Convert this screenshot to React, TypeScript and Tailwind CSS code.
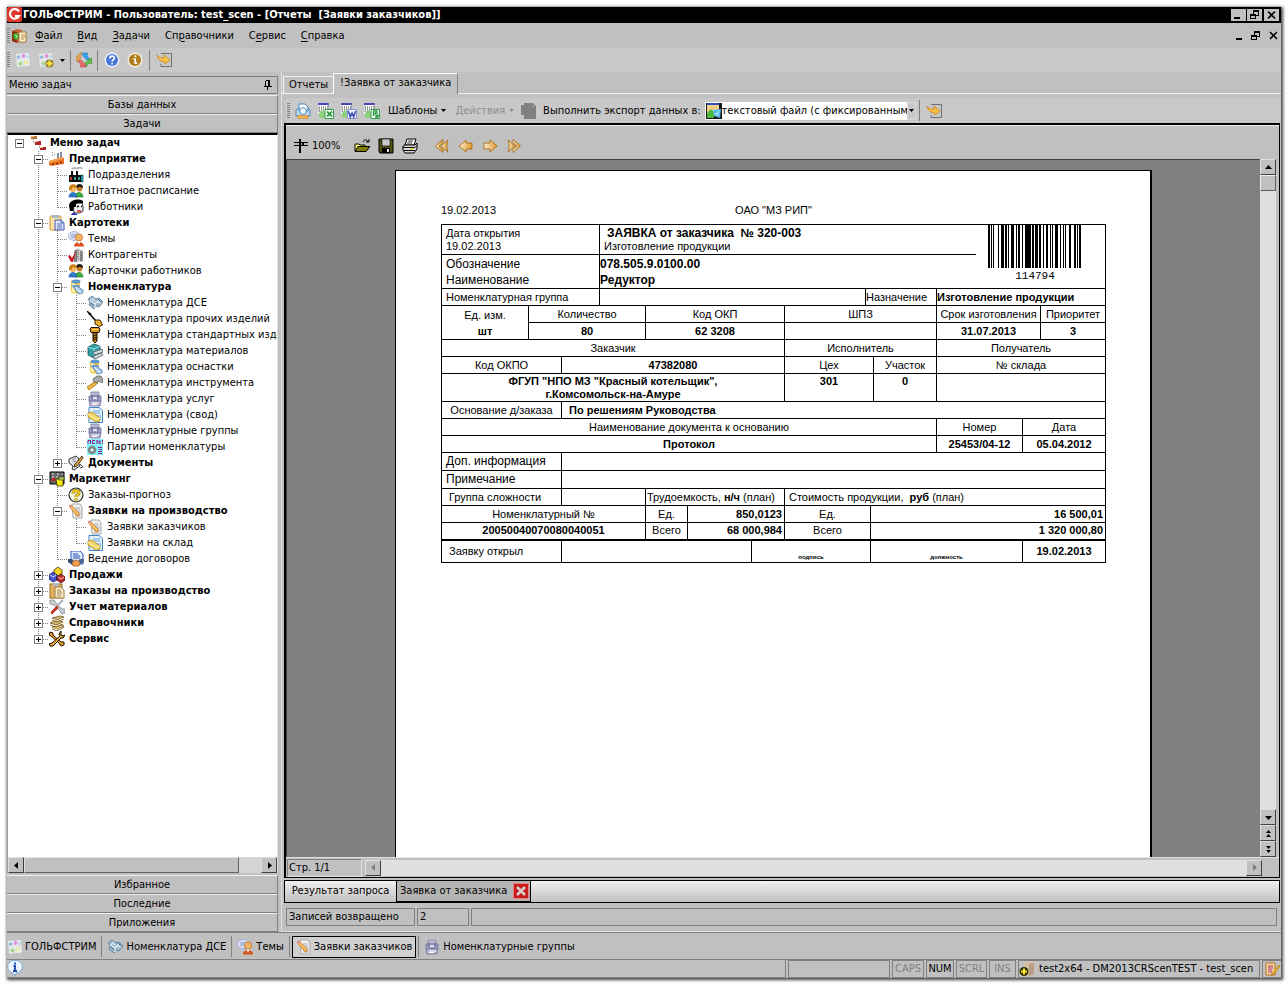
import { useState, type ReactNode } from "react";

/* ---------- icons ---------- */

function Ic({ children }: { children: ReactNode }) {
  return (
    <svg viewBox="0 0 16 16" className="size-4 shrink-0" aria-hidden>
      {children}
    </svg>
  );
}

const LogoIcon = () => (
  <Ic>
    <rect width="15" height="15" rx="2" fill="#e0362c" />
    <path d="M12 4.600A4.800 4.800 0 1 0 12 9H8" fill="none" stroke="#fff" strokeWidth="2.200" />
  </Ic>
);
const AppIcon = () => (
  <Ic>
    <path d="M1 3l5-2 5 1v11l-5 2-5-2z" fill="#c8643c" />
    <path d="M1 3l5 1v11l-5-2z" fill="#8c3014" />
    <path d="M2 6l4-1 2 3-2 4-3-1z" fill="#2fae2f" />
    <path d="M4 7l2 1-1 2" fill="none" stroke="#dfffb0" />
    <path d="M8 4h7v10H8z" fill="#fff4cc" stroke="#a07838" />
    <path d="M10 7h4M10 9h4M10 11h3" stroke="#b08848" />
  </Ic>
);
const Dots = () => (
  <>
    <path d="M1 2l13-1 1 12-13 2z" fill="#e4e8ea" />
    <path d="M2 3h3M10 13h4" stroke="#fff" />
    <circle cx="3.500" cy="5" r="1.800" fill="#8fb8dc" />
    <circle cx="8.500" cy="4" r="1.900" fill="#e48fe0" />
    <circle cx="12.500" cy="4.500" r="1.500" fill="#b8d8f0" />
    <circle cx="5.500" cy="11.500" r="1.900" fill="#a6d68a" />
    <circle cx="11" cy="10.500" r="2.100" fill="#e8e88c" />
    <circle cx="11" cy="10.500" r="0.800" fill="#fff" />
  </>
);
const DotsIcon = () => (
  <Ic>
    <Dots />
  </Ic>
);
const DotsAddIcon = () => (
  <Ic>
    <Dots />
    <circle cx="11.500" cy="11.500" r="4" fill="#8a7a30" />
    <path d="M11.500 8.500v6M8.500 11.500h6" stroke="#ffe93c" strokeWidth="2" />
  </Ic>
);
const CycleIcon = () => (
  <Ic>
    <path d="M6 1h6l-1 3 3 3-3 1-4-4z" fill="#38a0e8" stroke="#1878b8" strokeWidth=".5" />
    <path d="M16 6v6l-3-1-3 4-1-4 4-4z" fill="#5fc04a" stroke="#388828" strokeWidth=".5" />
    <path d="M10 15H4l1-3-4-3 4-1 4 4z" fill="#e86a6a" stroke="#b83838" strokeWidth=".5" />
    <path d="M0 9V5l5-5v5L3 9z" fill="#e0a460" stroke="#b07028" strokeWidth=".5" />
  </Ic>
);
const HelpIcon = () => (
  <Ic>
    <circle cx="8" cy="8" r="7.500" fill="#e8eefa" />
    <circle cx="8" cy="8" r="6" fill="#4676d8" />
    <path d="M5.800 6.400c0-3 4.600-3 4.600-.3 0 1.700-2.300 1.600-2.300 3.600M8.100 11v1.600" fill="none" stroke="#fff" strokeWidth="1.600" />
  </Ic>
);
const InfoIcon = () => (
  <Ic>
    <circle cx="8" cy="8" r="7.500" fill="#f2eadc" />
    <circle cx="8" cy="8" r="6" fill="#b07c1c" />
    <path d="M8.400 3.200v1.900M6.400 7h1.800v4.200h2" fill="none" stroke="#fff" strokeWidth="1.700" />
  </Ic>
);
const ExitIcon = () => (
  <Ic>
    <path d="M5 1.500h10.500v13H5V12" fill="none" stroke="#707070" />
    <path d="M1 3c2 3 4 3 7 3V3l6 5-5 4v-2C5 10 2 8 1 3z" fill="#f8c048" stroke="#c88418" strokeWidth=".8" />
  </Ic>
);
const PrintBlueIcon = () => (
  <Ic>
    <path d="M4 1h6l3 3v4H4z" fill="#fff" stroke="#3c88c8" />
    <path d="M1 7l3-2v3h9V5l2 2v6H1z" fill="#b8d8f0" stroke="#3878b0" strokeWidth=".8" />
    <circle cx="8" cy="8" r="3.400" fill="#e8f4fc" stroke="#5c98c8" />
    <path d="M3 12.500h10v3H3z" fill="#f4b450" stroke="#c88420" strokeWidth=".6" />
  </Ic>
);
const gridBase = (
  <>
    <path d="M0 0h11v11H0z" fill="#fff" />
    <path d="M0 0h11v2H0z" fill="#4444b8" />
    <path d="M1 4h9M1 6h9M1 8h6" stroke="#383838" strokeDasharray="1 1" />
    <path d="M0 0v9M10.500 0v6" stroke="#7878a8" strokeWidth=".7" />
    <path d="M1 11c0-3 4-5 6-2v6H3c-2-1-3-2-2-4z" fill="#8fd07c" />
  </>
);
const ExcelIcon = () => (
  <Ic>
    {gridBase}
    <path d="M7 6.500h8.500v9H7z" fill="#fff" stroke="#2f9c48" />
    <path d="M9 8.500l5 5M14 8.500l-5 5" stroke="#2f9c48" strokeWidth="1.800" />
  </Ic>
);
const WordIcon = () => (
  <Ic>
    {gridBase}
    <path d="M6.500 6.500h9v9h-9z" fill="#fff" stroke="#8890d8" />
    <path d="M7.500 8l1.800 6 1.700-4 1.700 4 1.800-6" fill="none" stroke="#3444b8" strokeWidth="1.500" />
  </Ic>
);
const SheetIcon = () => (
  <Ic>
    {gridBase}
    <path d="M7 6.500h8.500v9H7z" fill="#fff" stroke="#2f9c48" />
    <path d="M9 8h4v2h-2v1l3 3M9.500 8v5M14 11v3h-3" fill="none" stroke="#2f9c48" strokeWidth="1.300" />
  </Ic>
);
const StopDocIcon = () => (
  <Ic>
    <path d="M3 0h9l3 3v13H3v-4H0V2h3z" fill="#808080" />
    <path d="M11 1l3 3h-3z" fill="#989898" />
  </Ic>
);
const ExportIcon = () => (
  <Ic>
    <path d="M0 0h16v16H0z" fill="#181818" />
    <path d="M1 1h12v10H1z" fill="#f4d08c" />
    <path d="M1 0h12v2H1z" fill="#2c50c0" />
    <path d="M1 10l4-4 3 3v6H1z" fill="#50b83c" />
    <path d="M7 7l8-1-1 9-6-2z" fill="#58b8e8" />
    <path d="M8 11l6-4-2 6z" fill="#98dcf8" />
  </Ic>
);
const CropIcon = () => (
  <Ic>
    <path d="M1 4.500h14M1 7.500h14" stroke="#000" shapeRendering="crispEdges" />
    <path d="M7 1v14M9.500 4v4" stroke="#000" strokeWidth="2" shapeRendering="crispEdges" />
  </Ic>
);
const OpenIcon = () => (
  <Ic>
    <path d="M1 13V6h4l1 1h5v2" fill="#ffff70" stroke="#000" />
    <path d="M1 13.500l3-5h12l-4 5z" fill="#808000" stroke="#000" />
    <path d="M9 4c1-3 4-3 5 0M12 4h3V1" fill="none" stroke="#000" />
  </Ic>
);
const SaveIcon = () => (
  <Ic>
    <path d="M1 1h14v14H2l-1-1z" fill="#505010" stroke="#000" />
    <path d="M4 1h8v7H4z" fill="#c8c8c8" stroke="#000" strokeWidth=".6" />
    <path d="M4 10h8v5H4z" fill="#000" />
    <path d="M9 11h2v3H9z" fill="#e8e8e8" />
  </Ic>
);
const PrintIcon = () => (
  <Ic>
    <path d="M5 1h9l-2 6H3z" fill="#fff" stroke="#000" />
    <path d="M6 3h5M5 5h5" stroke="#000" strokeWidth=".8" />
    <path d="M3 7h10l2-2v6l-3 4H3l-2-3V8z" fill="#d8d8d8" stroke="#000" />
    <path d="M1 9.500h12l2-2M2 12.500h11" fill="none" stroke="#000" />
    <path d="M8 11h3" stroke="#e8e000" strokeWidth="1.500" />
  </Ic>
);
const OrangeDefs = () => (
  <defs>
    <linearGradient id="amber" x1="0" x2="1">
      <stop offset="0" stopColor="#f8ecd0" />
      <stop offset="1" stopColor="#e09c30" />
    </linearGradient>
  </defs>
);
const FirstIcon = () => (
  <Ic>
    <OrangeDefs />
    <path d="M9 1.500L1.500 8 9 14.500v-3L5 8l4-3.500z" fill="url(#amber)" stroke="#a86c10" strokeWidth=".9" />
    <path d="M14 2L7 8l7 6-1-3V5z" fill="url(#amber)" stroke="#a86c10" strokeWidth=".9" />
  </Ic>
);
const PrevIcon = () => (
  <Ic>
    <path d="M8 2L1 8l7 6v-3h6V5H8z" fill="url(#amber)" stroke="#a86c10" strokeWidth=".9" />
  </Ic>
);
const NextIcon = () => (
  <Ic>
    <path d="M8 2l7 6-7 6v-3H2V5h6z" fill="url(#amber)" stroke="#a86c10" strokeWidth=".9" />
  </Ic>
);
const LastIcon = () => (
  <Ic>
    <path d="M2 2l7 6-7 6 1-3V5z" fill="url(#amber)" stroke="#a86c10" strokeWidth=".9" />
    <path d="M7 1.500L14.500 8 7 14.500v-3L11 8 7 4.500z" fill="url(#amber)" stroke="#a86c10" strokeWidth=".9" />
  </Ic>
);
const PinIcon = () => (
  <svg viewBox="0 0 8 10" className="h-[10px] w-2" aria-hidden>
    <path d="M2 .5h4M1.500 1v5M5.500 1v5M4.500 1v5M0 6.500h8M3.500 7v3" stroke="#000" shapeRendering="crispEdges" />
  </svg>
);

/* tree icons */
const MenuTreeIcon = () => (
  <Ic>
    <path d="M3.500 4v4h3M9.500 9v4h3" fill="none" stroke="#888" strokeDasharray="1 1" />
    <path d="M1 1h6v3H1z" fill="#b87838" />
    <path d="M5 6h6v4H5z" fill="#b02828" />
    <path d="M10 12h6v3h-6z" fill="#a82424" />
    <path d="M1 1h3v1H1zM5 6h3v1H5zM10 12h3v1h-3z" fill="#f8c890" />
  </Ic>
);
const FactoryIcon = () => (
  <Ic>
    <path d="M8 2h2v7H8zM11 1h2v8h-2z" fill="#8090a0" />
    <path d="M0 10l14-4 1 2v5l-13 2-2-1z" fill="#e87020" />
    <path d="M0 10l14-4v2L1 12z" fill="#f8a050" />
    <path d="M3 13h2M7 12.500h2M11 11.500h2" stroke="#7c2c00" strokeWidth="1.500" />
    <path d="M3 1l1 1M5 3l1 1M3 4l1 1" stroke="#888" />
  </Ic>
);
const PlantIcon = () => (
  <Ic>
    <path d="M3 4h2v4h3V4h2v4h5v7H1V8h2z" fill="#101010" />
    <path d="M2 10h2v3H2z" fill="#c04020" />
    <path d="M6 10h2v3H6zM10 10h2v3h-2z" fill="#30a0a0" />
    <path d="M13 8h2v7h-2z" fill="#20d8e8" stroke="#000" strokeWidth=".6" />
    <path d="M4 2c2-2 4 0 6-1s4 0 4 1" fill="none" stroke="#b0b0b0" strokeWidth="1.800" />
  </Ic>
);
const PeopleIcon = () => (
  <Ic>
    <path d="M7 14c0-6 8-6 8 0z" fill="#3cb43c" stroke="#186818" strokeWidth=".6" />
    <circle cx="11.500" cy="5.500" r="3" fill="#c87c28" />
    <path d="M8 4c0-4 7-4 7 0v1l-3-1-4 1z" fill="#202020" />
    <path d="M1 14c0-6 8-6 8 0z" fill="#2c7cd4" stroke="#104480" strokeWidth=".6" />
    <circle cx="5" cy="5.500" r="3.400" fill="#f4b860" />
    <path d="M1 6c0-6 8-6 8-1L5 4 2 8z" fill="#c87c10" />
  </Ic>
);
const WorkerIcon = () => (
  <Ic>
    <path d="M5 3h9l1 4v5l-3 2H6z" fill="#f0f0f0" stroke="#000" strokeWidth=".8" />
    <path d="M1 7c0-6 9-8 14-5v2c-3 1-5 0-7 1v3H6l-1 4H2z" fill="#000" />
    <path d="M9 7.500h2M13 7.500h1" stroke="#000" strokeWidth="1.400" />
    <path d="M9 12h4" stroke="#e02020" strokeWidth="1.500" />
    <path d="M3 16c1-3 3-2 6-1v1z" fill="#2030c0" />
  </Ic>
);
const ClipboardIcon = () => (
  <Ic>
    <rect x="1" y="1" width="11" height="14" rx="1" fill="#fce4a8" stroke="#d09030" />
    <path d="M3 0h7v3H3z" fill="#a8b8c0" />
    <path d="M6 5h6l3 3v7H6z" fill="#e0e8ff" stroke="#4458b0" />
    <path d="M12 5v3h3M8 9h5M8 11h5M8 13h5" fill="none" stroke="#5870c0" />
  </Ic>
);
const ThemeIcon = () => (
  <Ic>
    <ellipse cx="6" cy="5" rx="6" ry="4.500" fill="#d8dcf4" stroke="#9ca4cc" strokeWidth=".7" />
    <path d="M3 8l3 4V9z" fill="#c4caec" />
    <path d="M3 4h6M3 6h4" stroke="#8898c8" />
    <path d="M6 15.500c0-6 10-6 10 0z" fill="#d8521c" />
    <circle cx="11" cy="6.500" r="3.600" fill="#f4b468" stroke="#b86818" strokeWidth=".7" />
    <path d="M9.500 10.500l1.500 3 1.500-3z" fill="#fff" />
  </Ic>
);
const ContragentIcon = () => (
  <Ic>
    <path d="M6 4l3-2v13H6z" fill="#808080" />
    <path d="M9 1l3 1v12l-3 1z" fill="#c8c8c8" />
    <path d="M12 3l3 1v10l-3 1z" fill="#909090" />
    <path d="M10 3v10M13 6v7" stroke="#505050" strokeDasharray="1 1" />
    <path d="M0 9l2-1 2 3 4-7-3 11H3z" fill="#c81820" />
  </Ic>
);
const ToolJarIcon = () => (
  <Ic>
    <path d="M3 2h9v11c-2 2-7 2-9 0z" fill="#f4cc44" />
    <path d="M4 3h3v10H4z" fill="#fff0a8" />
    <ellipse cx="8" cy="2.500" rx="4.500" ry="2" fill="#5c94cc" />
    <path d="M3 6h9l-1 4-4 1z" fill="#78a8dc" />
    <path d="M6 8l3-1 6 4v3l-5 1z" fill="#a8ccf0" stroke="#4878a8" strokeWidth=".7" />
    <path d="M7 8l6 6" stroke="#fff" />
  </Ic>
);
const BoltsIcon = () => (
  <Ic>
    <path d="M1 4l4-3 4 3 3-1 4 4-4 5-3-1-2 3-5-4 1-3z" fill="#9cb8cc" stroke="#587890" strokeWidth=".8" />
    <path d="M3 5l5 4 4-4M5 3l3 3M8 9v4M10 7l4 1" fill="none" stroke="#e4f0f8" strokeWidth="1.200" />
    <path d="M4 8l3 3M11 4l3 3" stroke="#486880" />
  </Ic>
);
const PlumbIcon = () => (
  <Ic>
    <path d="M0 0l9 10" stroke="#000" strokeWidth="1.500" />
    <circle cx="3" cy="3" r="1.300" fill="#000" />
    <path d="M8 9l5 0 2.500 5-3 1.500L8 13z" fill="#f0b030" stroke="#402800" />
  </Ic>
);
const ScrewIcon = () => (
  <Ic>
    <path d="M4 .5h8l1 2-1 3H4l-1-3z" fill="#e09820" stroke="#201000" />
    <path d="M5 2.500h6" stroke="#ffd468" />
    <path d="M6 6h4v8l-2 2-2-2z" fill="#c88010" stroke="#201000" />
    <path d="M6 9l4-1M6 11l4-1M6 13l4-1" stroke="#201000" />
  </Ic>
);
const MaterialIcon = () => (
  <Ic>
    <path d="M1 4l6-3 6 2v8l-6 4-6-3z" fill="#30a0a4" stroke="#145458" strokeWidth=".8" />
    <path d="M1 4l6 2 6-3M7 6v8" fill="none" stroke="#a0e0e0" />
    <path d="M6 9l9-3 1 3-8 3zM6 13l8-3 2 2-8 4z" fill="#d0d8dc" stroke="#485860" strokeWidth=".8" />
  </Ic>
);
const HammerIcon = () => (
  <Ic>
    <path d="M0 12l9-6 2 2-9 7z" fill="#f0b838" stroke="#a86c10" strokeWidth=".8" />
    <path d="M6 4l4-3h4l2 4-1 3-3-2-2 2-3-1z" fill="#a8a8a8" stroke="#606060" strokeWidth=".8" />
  </Ic>
);
const CalcIcon = () => (
  <Ic>
    <path d="M4 1h8v4H4z" fill="#b8b8d8" stroke="#8484a4" strokeWidth=".8" />
    <path d="M2 5h12v5H2z" fill="#9c9cc0" stroke="#74749c" strokeWidth=".8" />
    <path d="M5 4v4M11 4v4" stroke="#70708c" strokeWidth="1.400" />
    <path d="M6 7h4" stroke="#f0f0fa" strokeWidth="1.600" />
    <path d="M2 10h12l-1 5H3z" fill="#b4b4d0" stroke="#74749c" strokeWidth=".8" />
    <path d="M5 12h7M5 13.500h5" stroke="#fff" />
  </Ic>
);
const SummaryIcon = () => (
  <Ic>
    <path d="M2 .5h10l3.500 3v12H2z" fill="#e4f0fc" stroke="#3c84c8" />
    <path d="M6 4h7M6 6h7M9 9h5M10 11h4" stroke="#68a8dc" />
    <path d="M1 6l4-1 8 6v3l-4 1-8-5z" fill="#f4d468" stroke="#b48c18" strokeWidth=".8" />
    <path d="M1 7l7 5 5-1" fill="none" stroke="#fff4b8" />
  </Ic>
);
const BatchIcon = () => (
  <Ic>
    <path d="M0 0h16v16H0z" fill="#80f4f8" />
    <path d="M1 5V1.500h2.500V5M8 1.500H5.500v3H8M10 5V1l3 4V1M15.500 1v2M15.500 4v1" fill="none" stroke="#901890" />
    <circle cx="5" cy="11" r="3" fill="none" stroke="#808080" strokeWidth="2" />
    <path d="M5 6.500v9M.5 11h9M2 8l6 6M8 8l-6 6" stroke="#808080" />
    <circle cx="5" cy="11" r="1.500" fill="#e8e8e8" />
    <path d="M11 8.500h4M12 10.500h3M11 12.500h4M11 14.500h4" stroke="#8020a0" />
  </Ic>
);
const DocsIcon = () => (
  <Ic>
    <path d="M1 4l7-3 3 3-1 3 2 4-6 4-2-1 1-3-4-3z" fill="#e4e4ec" stroke="#202020" strokeWidth=".9" />
    <path d="M4 5l4-2M5 7l3-1M6 10l3-1" stroke="#808090" />
    <path d="M14 1L7 9l-1 3 3-1 6-8z" fill="#e8a838" stroke="#201808" strokeWidth=".8" />
    <path d="M12 9l3 3-3 1" fill="none" stroke="#404050" />
  </Ic>
);
const MarketIcon = () => (
  <Ic>
    <path d="M1 1h14v12H1z" fill="#686868" stroke="#000" />
    <path d="M3 3h2M8 3h2M13 3h1M3 6h2M7 6h2" stroke="#e8e8e8" />
    <path d="M3 7h3v3H3z" fill="#d01818" />
    <path d="M7 8h7v7H8z" fill="#f8ec18" stroke="#303000" strokeWidth=".8" />
    <path d="M10 6h5v3h-5z" fill="#b8c860" stroke="#303000" strokeWidth=".6" />
  </Ic>
);
const ForecastIcon = () => (
  <Ic>
    <circle cx="8" cy="8" r="7" fill="#f8f4dc" stroke="#303030" strokeWidth="1.200" />
    <path d="M5 6.500c0-4 6-4 6-.5 0 2-3 2-3 4M8 11.500v2" fill="none" stroke="#705800" strokeWidth="3" />
    <path d="M5 6.500c0-4 6-4 6-.5 0 2-3 2-3 4M8 11.500v2" fill="none" stroke="#f8d820" strokeWidth="1.900" />
  </Ic>
);
const RequestIcon = () => (
  <Ic>
    <path d="M4 1h8l2 3v11H5z" fill="#f0f0f0" stroke="#a8a8a8" />
    <path d="M7 5h5M8 7h4M9 9h4M9 11h4M7 13h5" stroke="#b0b0b8" />
    <path d="M1 3l2-1 8 8v3l-3-1z" fill="#f4b048" stroke="#b86c18" strokeWidth=".6" />
    <path d="M1 3l2-1 1 1-2 2z" fill="#e48898" />
    <path d="M3 4l7 7" stroke="#fcdc98" strokeWidth=".8" />
  </Ic>
);
const ContractIcon = () => (
  <Ic>
    <path d="M3 0h9l3 3v10H3z" fill="#dce8fc" stroke="#2c58c0" />
    <path d="M5 3h5M5 5h7M5 7h7" stroke="#3050b0" />
    <path d="M0 8h4l2 2v3H3l-3-2z" fill="#384c70" />
    <path d="M16 8h-4l-2 2v3h3l3-2z" fill="#486494" />
    <path d="M4 11l4-2 4 2-1 4H5z" fill="#f0a050" stroke="#a85c18" strokeWidth=".8" />
  </Ic>
);
const SalesIcon = () => (
  <Ic>
    <path d="M5 3l4-3 4 3v4L9 9 5 7z" fill="#f8d020" stroke="#383000" strokeWidth=".8" />
    <path d="M0 8l4-3 4 3v5l-4 2-4-3z" fill="#4858d0" stroke="#101850" strokeWidth=".8" />
    <path d="M8 10l4-3 4 3v3l-4 3-4-3z" fill="#c02828" stroke="#400808" strokeWidth=".8" />
    <path d="M1 8l3 2 3-2M9 10l3 2 3-2" fill="none" stroke="#fff" strokeWidth=".8" />
  </Ic>
);
const OrdersIcon = () => (
  <Ic>
    <rect x="1" y="1" width="12" height="14" fill="#e0b05c" stroke="#a06c20" />
    <path d="M4 0h6v3H4z" fill="#b0b8c0" />
    <path d="M6 4h6l3 3v8H6z" fill="#f8ecd0" stroke="#a07838" />
    <path d="M8 7h4M8 9h5M8 11h5M8 13h4" stroke="#a88850" />
  </Ic>
);
const RepairIcon = () => (
  <Ic>
    <path d="M1 1h4l2 3 6 6h3v4l-3 1-2-3-6-6-4-1z" fill="#c8ccd0" stroke="#888c90" strokeWidth=".8" />
    <path d="M14 1L7 8" stroke="#a8acb0" strokeWidth="1.800" />
    <path d="M8 7l-6 6 1 2 6-6z" fill="#e03828" stroke="#981c10" strokeWidth=".8" />
  </Ic>
);
const BooksIcon = () => (
  <Ic>
    <path d="M3 3l8-2 4 1-7 3zM1 8l8-3 5 2-7 3zM3 12l8-3 4 2-7 4z" fill="#d8b878" stroke="#6c5420" strokeWidth=".8" />
    <path d="M3 4l5 2 7-3M1 9l6 2 7-3M3 13l5 2 7-3" fill="none" stroke="#fff4d8" />
    <path d="M3 5l5 2 7-3M1 10l6 2 7-3M3 14l5 2 7-4" fill="none" stroke="#6c5420" strokeWidth=".8" />
  </Ic>
);
const ServiceIcon = () => (
  <Ic>
    <path d="M1 1l3 1v2l8 7h3v3l-3 1-2-3-8-7-2-1z" fill="#f0a020" stroke="#181000" />
    <path d="M12 0l-2 3 1 2-8 7-3 1 1 2 3 0 8-8h2l2-3-2 1-2-1z" fill="#e8a838" stroke="#181000" />
  </Ic>
);
const StatusInfoIcon = () => (
  <Ic>
    <path d="M8 .5a6.300 6.300 0 1 1 1 12.500l-1 3-2-3A6.300 6.300 0 0 1 8 .5z" fill="#eaf4ff" stroke="#78a4d0" strokeWidth=".9" />
    <path d="M8 2.500v2M6.500 6H8v5M6 11h4" fill="none" stroke="#1444a8" strokeWidth="1.800" />
  </Ic>
);
const DatabaseIcon = () => (
  <Ic>
    <path d="M5 2l5-2 5 1v12l-5 2-5-2z" fill="#d8c0a8" />
    <path d="M10 3l5-1v11l-5 2z" fill="#b89c84" />
    <circle cx="5" cy="10.500" r="4.500" fill="#383000" />
    <path d="M5 7.500v6M2 10.500h6" stroke="#ffec30" strokeWidth="2" />
  </Ic>
);
const NoteIcon = () => (
  <Ic>
    <path d="M2 2h9v12H2z" fill="#f8d8a0" stroke="#b86c20" />
    <path d="M4 5h5M4 7h5M4 9h4M4 11h4" stroke="#a83070" />
    <path d="M15 4l-6 7-2 3 3-1 6-8z" fill="#f8c030" stroke="#a07010" strokeWidth=".7" />
  </Ic>
);
const CloseTabIcon = () => (
  <Ic>
    <path d="M0 0h16v16H0z" fill="#f08080" />
    <path d="M1 1h14v14H1z" fill="#c81c1c" />
    <path d="M4 4l8 8M12 4l-8 8" stroke="#d8cccc" strokeWidth="2.600" />
  </Ic>
);

/* ---------- small parts ---------- */

type Dir = "left" | "right" | "up" | "down" | "up2" | "down2";
const arrowPaths: Record<Dir, string> = {
  left: "M5 0v7L1 3.500z",
  right: "M2 0v7l4-3.500z",
  up: "M0 5h7L3.500 1z",
  down: "M0 2h7L3.500 6z",
  up2: "M1 3h5L3.500 0zM1 7h5L3.500 4z",
  down2: "M1 0h5L3.500 3zM1 4h5L3.500 7z",
};
function Arrow({ dir }: { dir: Dir }) {
  return (
    <svg viewBox="0 0 7 7" className="size-[7px]" aria-hidden>
      <path d={arrowPaths[dir]} fill="currentColor" />
    </svg>
  );
}
function ScrollButton({ dir, label, disabled }: { dir: Dir; label: string; disabled?: boolean }) {
  return (
    <button
      type="button"
      aria-label={label}
      disabled={disabled}
      className="flex size-4 shrink-0 items-center justify-center border border-t-[#e0e0e0] border-r-[#404040] border-b-[#404040] border-l-[#e0e0e0] bg-[#c0c0c0] text-black disabled:text-[#808080]"
    >
      <Arrow dir={dir} />
    </button>
  );
}
const Grip = () => (
  <span className="h-4 w-[3px] shrink-0 bg-[repeating-linear-gradient(to_bottom,#808080_0px,#808080_1px,#c8c8c8_1px,#c8c8c8_2px)]" />
);
const Sep = () => <span className="h-[21px] w-px shrink-0 bg-[#808080]" />;
const Caret = () => (
  <svg viewBox="0 0 5 3" className="h-[3px] w-[5px] shrink-0" aria-hidden>
    <path d="M0 0h5L2.500 3z" fill="currentColor" />
  </svg>
);
function Tool({ label, children }: { label: string; children: ReactNode }) {
  return (
    <button type="button" aria-label={label} className="flex shrink-0 items-center">
      {children}
    </button>
  );
}

/* ---------- task tree ---------- */

type Node = { text: string; icon: ReactNode; open?: boolean; bold?: boolean; children?: Node[] };

const tree: Node = {
  text: "Меню задач",
  icon: <MenuTreeIcon />,
  bold: true,
  open: true,
  children: [
    {
      text: "Предприятие",
      icon: <FactoryIcon />,
      bold: true,
      open: true,
      children: [
        { text: "Подразделения", icon: <PlantIcon /> },
        { text: "Штатное расписание", icon: <PeopleIcon /> },
        { text: "Работники", icon: <WorkerIcon /> },
      ],
    },
    {
      text: "Картотеки",
      icon: <ClipboardIcon />,
      bold: true,
      open: true,
      children: [
        { text: "Темы", icon: <ThemeIcon /> },
        { text: "Контрагенты", icon: <ContragentIcon /> },
        { text: "Карточки работников", icon: <PeopleIcon /> },
        {
          text: "Номенклатура",
          icon: <ToolJarIcon />,
          bold: true,
          open: true,
          children: [
            { text: "Номенклатура ДСЕ", icon: <BoltsIcon /> },
            { text: "Номенклатура прочих изделий", icon: <PlumbIcon /> },
            { text: "Номенклатура стандартных изделий", icon: <ScrewIcon /> },
            { text: "Номенклатура материалов", icon: <MaterialIcon /> },
            { text: "Номенклатура оснастки", icon: <ToolJarIcon /> },
            { text: "Номенклатура инструмента", icon: <HammerIcon /> },
            { text: "Номенклатура услуг", icon: <CalcIcon /> },
            { text: "Номенклатура (свод)", icon: <SummaryIcon /> },
            { text: "Номенклатурные группы", icon: <CalcIcon /> },
            { text: "Партии номенклатуры", icon: <BatchIcon /> },
          ],
        },
        { text: "Документы", icon: <DocsIcon />, bold: true, children: [] },
      ],
    },
    {
      text: "Маркетинг",
      icon: <MarketIcon />,
      bold: true,
      open: true,
      children: [
        { text: "Заказы-прогноз", icon: <ForecastIcon /> },
        {
          text: "Заявки на производство",
          icon: <RequestIcon />,
          bold: true,
          open: true,
          children: [
            { text: "Заявки заказчиков", icon: <RequestIcon /> },
            { text: "Заявки на склад", icon: <SummaryIcon /> },
          ],
        },
        { text: "Ведение договоров", icon: <ContractIcon /> },
      ],
    },
    { text: "Продажи", icon: <SalesIcon />, bold: true, children: [] },
    { text: "Заказы на производство", icon: <OrdersIcon />, bold: true, children: [] },
    { text: "Учет материалов", icon: <RepairIcon />, bold: true, children: [] },
    { text: "Справочники", icon: <BooksIcon />, bold: true, children: [] },
    { text: "Сервис", icon: <ServiceIcon />, bold: true, children: [] },
  ],
};

function Guide({ line, branch, box }: { line?: "full" | "half" | "none"; branch?: boolean; box?: "plus" | "minus" }) {
  return (
    <svg viewBox="0 0 19 16" className="block h-4 w-[19px] shrink-0" shapeRendering="crispEdges" aria-hidden>
      {line === "full" && <path d="M9.500 0v16" stroke="#808080" strokeDasharray="1 1" />}
      {line === "half" && <path d="M9.500 0v9" stroke="#808080" strokeDasharray="1 1" />}
      {branch && <path d="M10 8.500h9" stroke="#808080" strokeDasharray="1 1" />}
      {box && <rect x="5.500" y="4.500" width="8" height="8" fill="#fff" stroke="#808080" />}
      {box && <path d={box === "plus" ? "M7 8.500h5M9.500 6v5" : "M7 8.500h5"} stroke="#000" />}
    </svg>
  );
}

function TreeItem({ node, trail, last, root }: { node: Node; trail: boolean[]; last: boolean; root?: boolean }) {
  const [open, setOpen] = useState(!!node.open);
  const cell = (
    <Guide
      line={root ? "none" : last ? "half" : "full"}
      branch={!root}
      box={node.children ? (open ? "minus" : "plus") : undefined}
    />
  );
  return (
    <li>
      <div className="flex h-4 items-center">
        {trail.map((more, i) => (
          <Guide key={i} line={more ? "full" : "none"} />
        ))}
        {node.children ? (
          <button type="button" className="shrink-0" aria-label={node.text} aria-expanded={open} onClick={() => setOpen(!open)}>
            {cell}
          </button>
        ) : (
          cell
        )}
        <span className="mr-1 ml-px flex shrink-0">{node.icon}</span>
        <span className={node.bold ? "font-bold whitespace-nowrap" : "whitespace-nowrap"}>{node.text}</span>
      </div>
      {open && node.children && node.children.length > 0 && (
        <ul>
          {node.children.map((c, i) => (
            <TreeItem key={c.text} node={c} trail={[...trail, !root && !last]} last={i === node.children!.length - 1} />
          ))}
        </ul>
      )}
    </li>
  );
}

function PanelButton({ children }: { children: ReactNode }) {
  return (
    <button
      type="button"
      className="h-[19px] w-full shrink-0 border-t border-r border-b border-t-[#f0f0f0] border-r-[#808080] border-b-[#808080] text-center"
    >
      {children}
    </button>
  );
}

function TaskPanel() {
  return (
    <aside className="flex w-[271px] shrink-0 flex-col">
      <div className="mt-1 mb-px flex h-[18px] shrink-0 items-center justify-between border border-l-0 border-[#808080] pr-[5px] pl-[2px]">
        <span>Меню задач</span>
        <button type="button" aria-label="Закрепить">
          <PinIcon />
        </button>
      </div>
      <PanelButton>Базы данных</PanelButton>
      <PanelButton>Задачи</PanelButton>
      <div className="flex min-h-0 flex-1 flex-col border-t-2 border-r border-l border-t-black border-r-[#e0e0e0] border-l-[#a0a0a0] bg-white">
        <ul className="min-h-0 flex-1 overflow-hidden pl-[2px]">
          <TreeItem node={tree} trail={[]} last root />
        </ul>
        <div className="flex h-4 shrink-0 bg-[#d4d4d4]">
          <ScrollButton dir="left" label="Влево" />
          <span className="w-[215px] border border-t-[#e0e0e0] border-r-[#606060] border-b-[#606060] border-l-[#e0e0e0] bg-[#c0c0c0]" />
          <span className="flex-1" />
          <ScrollButton dir="right" label="Вправо" />
        </div>
      </div>
      <div className="mt-[2px]">
        <PanelButton>Избранное</PanelButton>
        <PanelButton>Последние</PanelButton>
        <PanelButton>Приложения</PanelButton>
      </div>
    </aside>
  );
}

/* ---------- report ---------- */

const columns = [
  "w-[87px]",
  "w-[33px]",
  "w-[38px]",
  "w-[46px]",
  "w-[42px]",
  "w-[64px]",
  "w-[33px]",
  "w-[81px]",
  "w-[5px]",
  "w-[3px]",
  "w-[63px]",
  "w-[39px]",
  "w-[47px]",
  "w-[18px]",
  "w-[65px]",
];

type CellProps = { span: number; rows?: number; align?: "l" | "c" | "r"; bold?: boolean; big?: boolean; children?: ReactNode };
function Cell({ span, rows, align = "c", bold, big, children }: CellProps) {
  return (
    <td
      colSpan={span}
      rowSpan={rows}
      className={[
        "border border-black p-0 whitespace-nowrap",
        align === "l" ? "pl-1 text-left" : align === "r" ? "pr-[2px] text-right" : "text-center",
        bold ? "font-bold" : "",
        big ? "text-[12px]" : "",
      ].join(" ")}
    >
      {children}
    </td>
  );
}

const bars = [
  [0, 2], [3, 1], [5, 1], [10, 1], [13, 3], [17, 2], [20, 1], [23, 3], [28, 1], [30, 2], [34, 1], [37, 6], [44, 2], [47, 3],
  [51, 2], [55, 1], [58, 2], [62, 1], [64, 1], [67, 3], [72, 1], [75, 1], [77, 1], [81, 2], [86, 2], [89, 1], [91, 2],
];

function Report() {
  return (
    <table className="w-[665px] table-fixed border-collapse text-[11px] leading-[13px]">
      <colgroup>
        {columns.map((c, i) => (
          <col key={i} className={c} />
        ))}
      </colgroup>
      <tbody>
        <tr className="h-[30px]">
          <Cell span={3} align="l">
            Дата открытия
            <br />
            19.02.2013
          </Cell>
          <td colSpan={9} className="border border-r-0 border-black p-0 pl-1">
            <div className="pl-[3px] text-[12px] font-bold whitespace-pre">ЗАЯВКА от заказчика  № 320-003</div>
            <div>Изготовление продукции</div>
          </td>
          <td colSpan={3} rowSpan={2} className="border border-l-0 border-black p-0 align-top">
            <div className="flex w-[119px] flex-col items-center">
              <svg viewBox="0 0 94 43" className="h-[43px] w-[94px]" shapeRendering="crispEdges" aria-hidden>
                {bars.map(([x, w]) => (
                  <rect key={x} x={x} y="0" width={w} height="43" />
                ))}
              </svg>
              <span className="mt-[2px] font-['Liberation_Mono',monospace]">114794</span>
            </div>
          </td>
        </tr>
        <tr className="h-[34px]">
          <Cell span={3} align="l" big>
            <div className="leading-4">
              Обозначение
              <br />
              Наименование
            </div>
          </Cell>
          <td colSpan={9} className="border border-r-0 border-black p-0 text-[12px] leading-4 font-bold">
            078.505.9.0100.00
            <br />
            Редуктор
          </td>
        </tr>
        <tr className="h-[17px]">
          <Cell span={3} align="l">Номенклатурная группа</Cell>
          <Cell span={5} />
          <td colSpan={3} className="border border-black p-0 whitespace-nowrap">Назначение</td>
          <td colSpan={4} className="border border-black p-0 font-bold whitespace-nowrap">Изготовление продукции</td>
        </tr>
        <tr className="h-[17px]">
          <Cell span={1} rows={2}>
            <div className="leading-4">
              Ед. изм.
              <br />
              <b>шт</b>
            </div>
          </Cell>
          <Cell span={3}>Количество</Cell>
          <Cell span={3}>Код ОКП</Cell>
          <Cell span={4}>ШПЗ</Cell>
          <Cell span={3}>Срок изготовления</Cell>
          <Cell span={1}>Приоритет</Cell>
        </tr>
        <tr className="h-[17px]">
          <Cell span={3} bold>80</Cell>
          <Cell span={3} bold>62 3208</Cell>
          <Cell span={4} />
          <Cell span={3} bold>31.07.2013</Cell>
          <Cell span={1} bold>3</Cell>
        </tr>
        <tr className="h-[17px]">
          <Cell span={7}>Заказчик</Cell>
          <Cell span={4}>Исполнитель</Cell>
          <Cell span={4}>Получатель</Cell>
        </tr>
        <tr className="h-[17px]">
          <Cell span={2}>Код ОКПО</Cell>
          <Cell span={5} bold>47382080</Cell>
          <Cell span={3}>Цех</Cell>
          <Cell span={1}>Участок</Cell>
          <Cell span={4}>№ склада</Cell>
        </tr>
        <tr className="h-[28px]">
          <Cell span={7} bold>
            ФГУП "НПО МЗ "Красный котельщик",
            <br />
            г.Комсомольск-на-Амуре
          </Cell>
          <Cell span={3} bold>
            301
            <br />
            &nbsp;
          </Cell>
          <Cell span={1} bold>
            0
            <br />
            &nbsp;
          </Cell>
          <Cell span={4} />
        </tr>
        <tr className="h-[17px]">
          <Cell span={2}>Основание д/заказа</Cell>
          <Cell span={13} align="l" bold>
            <span className="pl-[3px]">По решениям Руководства</span>
          </Cell>
        </tr>
        <tr className="h-[17px]">
          <Cell span={11}>Наименование документа к основанию</Cell>
          <Cell span={2}>Номер</Cell>
          <Cell span={2}>Дата</Cell>
        </tr>
        <tr className="h-[17px]">
          <Cell span={11} bold>Протокол</Cell>
          <Cell span={2} bold>25453/04-12</Cell>
          <Cell span={2} bold>05.04.2012</Cell>
        </tr>
        <tr className="h-[18px]">
          <Cell span={2} align="l" big>Доп. информация</Cell>
          <Cell span={13} />
        </tr>
        <tr className="h-[18px]">
          <Cell span={2} align="l" big>Примечание</Cell>
          <Cell span={13} />
        </tr>
        <tr className="h-[17px]">
          <Cell span={2} align="l">
            <span className="pl-[3px]">Группа сложности</span>
          </Cell>
          <Cell span={2} />
          <td colSpan={3} className="border border-black p-0 pl-px whitespace-nowrap">
            Трудоемкость, <b>н/ч</b> (план)
          </td>
          <Cell span={8} align="l">
            Стоимость продукции, &nbsp;<b>руб</b> (план)
          </Cell>
        </tr>
        <tr className="h-[17px]">
          <Cell span={4}>Номенклатурный №</Cell>
          <Cell span={1}>Ед.</Cell>
          <Cell span={2} align="r" bold>850,0123</Cell>
          <Cell span={2}>Ед.</Cell>
          <Cell span={6} align="r" bold>16 500,01</Cell>
        </tr>
        <tr className="h-[17px]">
          <Cell span={4} bold>20050040070080040051</Cell>
          <Cell span={1}>Всего</Cell>
          <Cell span={2} align="r" bold>68 000,984</Cell>
          <Cell span={2}>Всего</Cell>
          <Cell span={6} align="r" bold>1 320 000,80</Cell>
        </tr>
        <tr className="h-[23px] border-t-2 border-black">
          <Cell span={2} align="l">
            <span className="pl-[3px]">Заявку открыл</span>
          </Cell>
          <Cell span={4} />
          <td colSpan={3} className="border border-black p-0 pb-[2px] text-center align-bottom text-[6px] leading-[6px] font-bold">подпись</td>
          <td colSpan={4} className="border border-black p-0 pb-[2px] text-center align-bottom text-[6px] leading-[6px] font-bold">должность</td>
          <Cell span={2} bold>19.02.2013</Cell>
        </tr>
      </tbody>
    </table>
  );
}

function Viewer() {
  return (
    <section className="flex min-h-0 flex-1 flex-col border-t-2 border-r border-b border-l-2 border-black bg-[#c0c0c0]">
      <div className="flex h-[34px] shrink-0 items-center border-t border-[#f0f0f0] pt-[6px] pl-[7px]">
        <Tool label="Масштаб">
          <CropIcon />
          <span className="ml-[3px] w-[42px] text-left">100%</span>
        </Tool>
        <div className="flex gap-2">
          <Tool label="Открыть"><OpenIcon /></Tool>
          <Tool label="Сохранить"><SaveIcon /></Tool>
          <Tool label="Печать"><PrintIcon /></Tool>
        </div>
        <div className="ml-4 flex gap-2">
          <Tool label="Первая"><FirstIcon /></Tool>
          <Tool label="Предыдущая"><PrevIcon /></Tool>
          <Tool label="Следующая"><NextIcon /></Tool>
          <Tool label="Последняя"><LastIcon /></Tool>
        </div>
      </div>
      <div className="flex min-h-0 flex-1 pr-[3px]">
        <div className="flex min-w-0 flex-1 justify-center border-t border-l border-[#404040] bg-[#808080] pt-[10px]">
          <article className="w-[757px] border-t border-r-2 border-l border-black bg-white pt-[31px] pl-[45px] font-['Liberation_Sans',Arial,sans-serif] text-black">
            <div className="mb-[6px] grid w-[665px] grid-cols-[1fr_auto_1fr] text-[11px] leading-4">
              <span>19.02.2013</span>
              <span>ОАО "МЗ РИП"</span>
            </div>
            <Report />
          </article>
        </div>
        <div className="flex w-4 shrink-0 flex-col bg-[#e0e0e0]">
          <ScrollButton dir="up" label="Вверх" />
          <span className="h-4 shrink-0 border border-t-[#f0f0f0] border-r-[#606060] border-b-[#606060] border-l-[#f0f0f0] bg-[#c0c0c0]" />
          <span className="flex-1" />
          <ScrollButton dir="down" label="Вниз" />
          <ScrollButton dir="up2" label="Страница вверх" />
          <ScrollButton dir="down2" label="Страница вниз" />
        </div>
      </div>
      <div className="flex h-[20px] shrink-0 items-center gap-[3px] border-t border-[#e0e0e0] pr-[17px] pl-px">
        <span className="h-[18px] w-[75px] border border-t-[#808080] border-r-[#e0e0e0] border-b-[#e0e0e0] border-l-[#808080] pl-px leading-4">Стр. 1/1</span>
        <div className="flex h-4 flex-1 justify-between bg-[#e0e0e0]">
          <ScrollButton dir="left" label="Страница влево" disabled />
          <ScrollButton dir="right" label="Страница вправо" disabled />
        </div>
      </div>
    </section>
  );
}

function ReportPanel() {
  return (
    <main className="flex min-w-0 flex-1 flex-col border-b border-l border-[#e0e0e0]">
      <div className="flex h-[22px] shrink-0 items-end border-b border-[#f0f0f0] pl-px">
        <button type="button" className="h-[17px] border-t border-l border-[#f0f0f0] px-[5px] leading-4">Отчеты</button>
        <button type="button" className="-mb-px h-[21px] border-t border-r border-l border-t-white border-r-[#808080] border-l-white bg-[#c0c0c0] px-[6px] pb-[3px]">!Заявка от заказчика</button>
      </div>
      <div className="mt-1 ml-[3px] flex h-[25px] shrink-0 items-center rounded-l bg-[#c8c8c8] pl-[2px] whitespace-nowrap">
        <Grip />
        <div className="ml-[5px] flex gap-[7px]">
          <Tool label="Печать"><PrintBlueIcon /></Tool>
          <Tool label="Экспорт в Excel"><ExcelIcon /></Tool>
          <Tool label="Экспорт в Word"><WordIcon /></Tool>
          <Tool label="Экспорт таблицы"><SheetIcon /></Tool>
        </div>
        <button type="button" className="ml-2 flex items-center gap-1">Шаблоны <Caret /></button>
        <button type="button" disabled className="ml-[9px] flex items-center gap-1 text-[#909090]">Действия <Caret /></button>
        <span className="ml-[7px] flex"><StopDocIcon /></span>
        <label htmlFor="target" className="ml-[6px]">Выполнить экспорт данных в:</label>
        <div className="ml-1 flex h-[18px] w-[211px] items-center bg-white pl-px">
          <ExportIcon />
          <select id="target" className="h-4 w-0 flex-1 appearance-none overflow-hidden bg-white text-clip outline-none">
            <option>текстовый файл (с фиксированным</option>
          </select>
          <span className="flex h-full w-[9px] items-center justify-center border border-[#d8d8d8] bg-[#c8c8c8]"><Caret /></span>
        </div>
        <span className="mr-[6px] ml-[3px] flex"><Sep /></span>
        <Tool label="Выход"><ExitIcon /></Tool>
      </div>
      <div className="mr-px ml-[2px] flex min-h-0 flex-1 flex-col">
        <Viewer />
        <div className="mt-[2px] flex h-[23px] shrink-0 border border-black bg-linear-to-b from-[#f0f0f0] to-[#c0c0c0]">
          <button type="button" className="w-[111px] pb-[2px]">Результат запроса</button>
          <button type="button" className="flex w-[135px] items-center justify-between border-x border-b border-black bg-[#b4b4b4] pr-px pl-[3px]">
            <span>Заявка от заказчика</span>
            <CloseTabIcon />
          </button>
        </div>
        <div className="mt-[5px] mb-[5px] flex h-[18px] shrink-0 gap-[2px] pr-[3px] pl-[2px] leading-4">
          <span className="w-[129px] border border-[#808080] pl-[2px]">Записей возвращено</span>
          <span className="w-[52px] border border-[#808080] pl-[2px]">2</span>
          <span className="flex-1 border border-[#808080]" />
        </div>
      </div>
    </main>
  );
}

/* ---------- frame ---------- */

const menu: [string, string, string][] = [
  ["", "Ф", "айл"],
  ["", "В", "ид"],
  ["", "З", "адачи"],
  ["Сп", "р", "авочники"],
  ["С", "е", "рвис"],
  ["", "С", "правка"],
];

function WindowButtons() {
  return (
    <svg viewBox="0 0 48 12" className="h-3 w-12" shapeRendering="crispEdges" aria-hidden>
      <path d="M0 0h15v12H0zM16 0h15v12H16zM33 0h15v12H33z" fill="#c0c0c0" />
      <path d="M3 8h6v2H3zM19 5h6v2h-6zM22 1h6v2h-6z" fill="#000" />
      <path d="M19.500 6v3.500h5V6M22.500 2v3M27.500 2v4.500H25" fill="none" stroke="#000" />
      <path d="M37 2.500l7 7M44 2.500l-7 7" stroke="#000" strokeWidth="1.600" shapeRendering="auto" />
    </svg>
  );
}
function ChildButtons() {
  return (
    <svg viewBox="0 0 42 10" className="h-[10px] w-[42px]" shapeRendering="crispEdges" aria-hidden>
      <path d="M0 7h6v2H0zM15 4h6v2h-6zM18 0h6v2h-6z" fill="#000" />
      <path d="M15.500 5v3.500h5V5M18.500 1v3M23.500 1v4.500H21" fill="none" stroke="#000" />
      <path d="M34 1l7 7M41 1l-7 7" stroke="#000" strokeWidth="1.600" shapeRendering="auto" />
    </svg>
  );
}

export default function App() {
  return (
    <div className="flex min-h-screen bg-white p-[7px] font-['DejaVu_Sans_Condensed','DejaVu_Sans',sans-serif] text-[11px] leading-[14px] text-black">
      <div className="flex min-w-0 flex-1 flex-col bg-[#c0c0c0] shadow-[1px_1px_3px_1px_rgba(0,0,0,0.75)]">
        <header className="shrink-0">
          <div className="flex h-4 items-center justify-between bg-black pr-[2px] text-white">
            <h1 className="flex items-center font-bold whitespace-pre">
              <LogoIcon />
              ГОЛЬФСТРИМ - Пользователь: test_scen - [Отчеты  [Заявки заказчиков]]
            </h1>
            <WindowButtons />
          </div>
          <div className="flex h-[25px] items-center pr-[3px]">
            <Grip />
            <span className="mr-[8px] ml-px flex"><AppIcon /></span>
            <nav className="flex flex-1 gap-[15px]">
              {menu.map(([a, b, c]) => (
                <button type="button" key={c}>
                  {a}
                  <u className="underline-offset-2">{b}</u>
                  {c}
                </button>
              ))}
            </nav>
            <ChildButtons />
          </div>
          <div className="flex h-6 items-center bg-[#c8c8c8]">
            <Grip />
            <div className="ml-[5px] flex items-center gap-[7px]">
              <Tool label="Рабочий стол"><DotsIcon /></Tool>
              <Tool label="Добавить"><DotsAddIcon /></Tool>
            </div>
            <button type="button" aria-label="Список" className="mr-[5px] ml-[6px]"><Caret /></button>
            <Sep />
            <span className="mx-[5px] flex"><Tool label="Обновить"><CycleIcon /></Tool></span>
            <Sep />
            <div className="mx-[6px] flex gap-[7px]">
              <Tool label="Помощь"><HelpIcon /></Tool>
              <Tool label="О программе"><InfoIcon /></Tool>
            </div>
            <Sep />
            <span className="ml-[6px] flex"><Tool label="Выход"><ExitIcon /></Tool></span>
          </div>
        </header>

        <div className="flex min-h-0 flex-1 gap-[3px] border-b border-[#808080]">
          <TaskPanel />
          <ReportPanel />
        </div>

        <footer className="shrink-0">
          <div className="flex h-[27px] items-center gap-[5px] border-b border-[#808080] pt-px whitespace-nowrap">
            <button type="button" className="flex items-center gap-[2px]"><DotsIcon />ГОЛЬФСТРИМ</button>
            <Sep />
            <button type="button" className="flex items-center gap-[3px]"><BoltsIcon />Номенклатура ДСЕ</button>
            <Sep />
            <button type="button" className="flex items-center gap-[3px]"><ThemeIcon />Темы</button>
            <Sep />
            <button type="button" className="-mx-[3px] flex h-[22px] items-center gap-[2px] border border-black bg-[#d0d0d0] px-[3px]"><RequestIcon />Заявки заказчиков</button>
            <Sep />
            <button type="button" className="flex items-center gap-[3px]"><CalcIcon />Номенклатурные группы</button>
          </div>
          <div className="flex h-[18px] gap-[2px] leading-4 whitespace-nowrap">
            <span className="flex flex-1 border-r border-b border-[#808080]"><StatusInfoIcon /></span>
            <span className="w-[102px] border border-[#808080]" />
            <span className="w-[32px] border border-[#808080] text-center text-[#808080]">CAPS</span>
            <span className="w-[28px] border border-[#808080] text-center">NUM</span>
            <span className="w-[31px] border border-[#808080] text-center text-[#808080]">SCRL</span>
            <span className="w-[27px] border border-[#808080] text-center text-[#808080]">INS</span>
            <span className="flex w-[242px] gap-1 border border-[#808080]"><DatabaseIcon />test2x64 - DM2013CRScenTEST - test_scen</span>
            <span className="flex w-[19px] justify-center border border-r-0 border-[#808080]"><NoteIcon /></span>
          </div>
        </footer>
      </div>
    </div>
  );
}
